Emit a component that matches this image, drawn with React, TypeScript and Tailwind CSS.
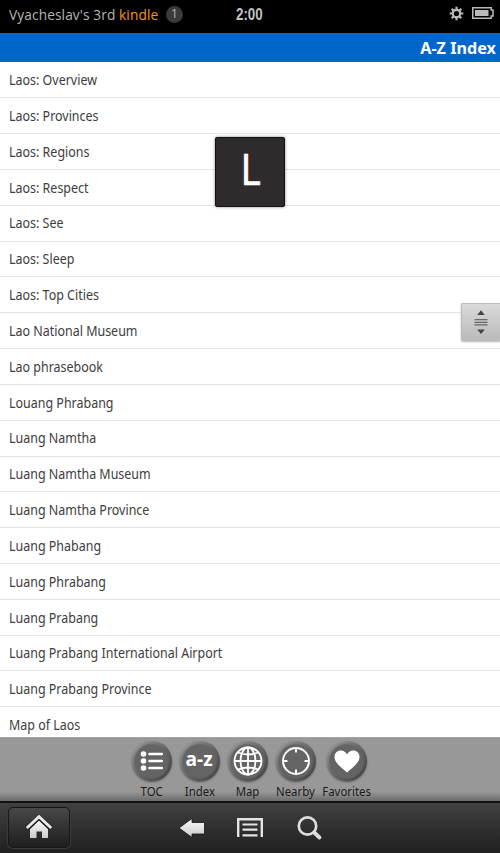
import type { ReactNode } from "react";

const entries = [
  "Laos: Overview",
  "Laos: Provinces",
  "Laos: Regions",
  "Laos: Respect",
  "Laos: See",
  "Laos: Sleep",
  "Laos: Top Cities",
  "Lao National Museum",
  "Lao phrasebook",
  "Louang Phrabang",
  "Luang Namtha",
  "Luang Namtha Museum",
  "Luang Namtha Province",
  "Luang Phabang",
  "Luang Phrabang",
  "Luang Prabang",
  "Luang Prabang International Airport",
  "Luang Prabang Province",
  "Map of Laos",
];

function StatusBar() {
  return (
    <header className="relative flex h-[33px] shrink-0 items-center bg-black pt-px pl-[8.5px] pr-[6px] text-[#b5b5b5]">
      <div className="flex h-[26px] w-[150px] origin-left scale-x-[0.98] items-center whitespace-nowrap pb-[5px] font-['Open_Sans',sans-serif] text-[14px] tracking-[0.1px]">
        Vyacheslav's 3rd&nbsp;<span className="text-[#f7941d]">kindle</span>
      </div>
      <span className="ml-[7.5px] mb-[6px] flex h-[17px] w-[17px] items-center justify-center rounded-full bg-[#3a3a3a] font-['Open_Sans',sans-serif] text-[12px] leading-none">
        1
      </span>
      <span className="absolute left-[236px] top-[5px] origin-left scale-x-[0.83] font-['Liberation_Sans',sans-serif] text-[16px] font-bold leading-[19px] text-[#c4c4c4]">
        2:00
      </span>
      <div className="mb-[8px] ml-auto flex items-center gap-[8px]">
        <svg width="15" height="15" viewBox="-7.5 -7.5 15 15" fill="none" stroke="#b9b9b9">
          <circle r="3.7" strokeWidth="2.2" />
          <path
            strokeWidth="2.2"
            d="M0-4V-6.8M0 4V6.8M-4 0H-6.8M4 0H6.8M-2.9-2.9-4.8-4.8M2.9-2.9 4.8-4.8M-2.9 2.9-4.8 4.8M2.9 2.9 4.8 4.8"
          />
        </svg>
        <svg width="22" height="12" viewBox="0 0 22 12">
          <path d="M.75.75H19.2V3H21V9H19.2V11.25H.75Z" fill="none" stroke="#b9b9b9" strokeWidth="1.5" />
          <path d="M3 3H16.5V9H3Z" fill="#b9b9b9" />
        </svg>
      </div>
    </header>
  );
}

function IndexList() {
  return (
    <main className="relative h-[674.5px] shrink-0 bg-white">
      <ul className="h-full overflow-hidden pt-[0.4px]">
        {entries.map((entry) => (
          <li key={entry} className="flex h-[35.83px] items-center border-b border-[#e3e3e3] pl-[8.5px] pt-[0.6px]">
            <span className="origin-left scale-x-[0.89] whitespace-nowrap text-[14px] leading-[20px] text-[#3d3d3d]">
              {entry}
            </span>
          </li>
        ))}
      </ul>

      {/* Current letter overlay */}
      <div className="absolute left-[215px] top-[75px] flex h-[70px] w-[70px] items-center justify-center rounded-[2px] border border-[#151212] bg-[#2f2b2c] text-[44px] leading-none text-white shadow-[0_0_3px_rgba(0,0,0,0.5)]">
        <span className="mb-[9px] ml-px scale-x-[0.88] [-webkit-text-stroke:0.6px_#fff]">L</span>
      </div>

      {/* Fast scroll thumb */}
      <div className="absolute right-0 top-[241px] flex h-[38px] w-[39px] items-center justify-center rounded-l-[2px] border border-r-0 border-[#bdbdbd] bg-linear-to-b from-[#dadada] to-[#bababa] shadow-[0_1px_2px_rgba(0,0,0,0.3)]">
        <svg width="14" height="26" viewBox="0 0 14 26">
          <path d="M3.2 6 7 1.3 10.8 6ZM3.2 20.5H10.8L7 25Z" fill="#444" />
          <path d="M.5 10.7H13.5M.5 13.3H13.5M.5 15.9H13.5" stroke="#666" strokeWidth="1.2" />
        </svg>
      </div>
    </main>
  );
}

function ToolButton({ label, children }: { label: string; children: ReactNode }) {
  return (
    <button className="flex w-[48px] flex-col items-center">
      <span className="flex h-[40px] w-[40px] items-center justify-center rounded-full bg-linear-to-br from-[#a2a2a2] via-[#686868] to-[#383838] shadow-[0_1px_2px_rgba(0,0,0,0.45)]">
        <span className="flex h-[33px] w-[33px] items-center justify-center rounded-full bg-[#646464] shadow-[0_0_2px_1px_#646464]">
          {children}
        </span>
      </span>
      <span className="mt-[2.5px] whitespace-nowrap text-[12px] leading-[16px] text-[#1b1b1b]">
        <span className="inline-block scale-x-[0.95]">{label}</span>
      </span>
    </button>
  );
}

function Toolbar() {
  return (
    <nav className="flex h-[64.5px] shrink-0 justify-center border-t border-[#a3a3a3] bg-linear-to-b from-[#989898] from-85% to-[#6c6c6c] pt-[3.5px] pr-[2px]">
      <ToolButton label="TOC">
        <svg width="26" height="24" viewBox="0 0 26 24" fill="none" stroke="#fff" strokeLinecap="round">
          <path d="M4.5 5H4.51M4.5 12H4.51M4.5 19H4.51" strokeWidth="5.6" />
          <path d="M10.5 5H22.8M10.5 12H22.8M10.5 19H22.8" strokeWidth="2.5" />
        </svg>
      </ToolButton>
      <ToolButton label="Index">
        <span className="mb-[5px] scale-x-[0.96] text-[20px] font-bold leading-none text-white">a-z</span>
      </ToolButton>
      <ToolButton label="Map">
        <svg className="shrink-0" width="30" height="30" viewBox="0 0 30 30" fill="none" stroke="#fff" strokeWidth="1.8">
          <circle cx="15" cy="15" r="13.5" />
          <ellipse cx="15" cy="15" rx="7.5" ry="13.5" />
          <path d="M15 2V28M2 15H28M5 6.5Q15 10.5 25 6.5M5 23.5Q15 19.5 25 23.5" />
        </svg>
      </ToolButton>
      <ToolButton label="Nearby">
        <svg className="shrink-0" width="30" height="30" viewBox="0 0 30 30" fill="none" stroke="#fff" strokeWidth="1.9">
          <circle cx="15" cy="15" r="13" />
          <path d="M15 2V6.5M15 23.5V28M2 15H6.5M23.5 15H28" strokeWidth="2" />
        </svg>
      </ToolButton>
      <div className="pl-[3px]">
        <ToolButton label="Favorites">
          <svg className="shrink-0" width="28" height="26" viewBox="0 0 28 26" fill="#fff">
            <path d="M14 24.5C10 20.5 1.5 15.5 1.5 9 1.5 5 4.3 2.5 7.8 2.5 10.8 2.5 13 4.2 14 6.5 15 4.2 17.2 2.5 20.2 2.5 23.7 2.5 26.5 5 26.5 9 26.5 15.5 18 20.5 14 24.5Z" />
          </svg>
        </ToolButton>
      </div>
    </nav>
  );
}

function SystemBar() {
  return (
    <footer className="flex h-[52px] shrink-0 items-center border-t-2 border-[#111] bg-linear-to-b from-[#414141] to-[#202020] pl-[8px]">
      <button className="mb-[2px] flex h-[41px] w-[62px] items-center justify-center rounded-[5px] border border-[#171717] bg-linear-to-b from-[#484848] to-[#1f1f1f] shadow-[0_0_0_1px_#3b3b3b]">
        <svg width="28" height="26" viewBox="0 0 28 26">
          <defs>
            <linearGradient id="metal" x2="0" y2="1">
              <stop stopColor="#fafafa" />
              <stop offset="1" stopColor="#c9cbce" />
            </linearGradient>
          </defs>
          <path d="M5 14.5 14 6 23 14.5V24H17V17.5H11.5V24H5Z" fill="url(#metal)" />
          <path d="M2 14.3 14 3.2 26 14.3" fill="none" stroke="#191919" strokeWidth="5" />
          <path d="M1.8 14 14 2.6 26.2 14" fill="none" stroke="#e7e7e7" strokeWidth="3" />
        </svg>
      </button>
      <svg className="ml-[108px]" width="28" height="22" viewBox="0 0 28 22">
        <path d="M1 11 14 1.5V5.5H26.5V17H14V20.5Z" fill="url(#metal)" stroke="#151515" strokeWidth=".8" />
      </svg>
      <svg className="ml-[30px]" width="28" height="22" viewBox="0 0 28 22" fill="none" stroke="#e4e4e4">
        <path d="M2.2 20V2.2H25.8V20" strokeWidth="2.4" />
        <path d="M6.5 7.5H21.5M6.5 12.7H21.5M6.5 18.4H21.5" strokeWidth="2.2" />
      </svg>
      <svg className="ml-[32px]" width="28" height="26" viewBox="0 0 28 26" fill="none" stroke="#dedede">
        <circle cx="11.5" cy="11" r="8.7" strokeWidth="2.7" />
        <path d="M18.2 17.5 23.5 22.5" strokeWidth="3.8" strokeLinecap="round" />
      </svg>
    </footer>
  );
}

export default function App() {
  return (
    <div className="flex h-[853px] w-[500px] flex-col overflow-hidden bg-black font-['Noto_Sans',sans-serif]">
      <StatusBar />
      <div className="flex h-[29px] shrink-0 items-center justify-end bg-[#0066cc] pr-[4px]">
        <h1 className="origin-right text-[16px] font-bold leading-none text-white scale-x-[1.01]">A-Z Index</h1>
      </div>
      <IndexList />
      <Toolbar />
      <SystemBar />
    </div>
  );
}
